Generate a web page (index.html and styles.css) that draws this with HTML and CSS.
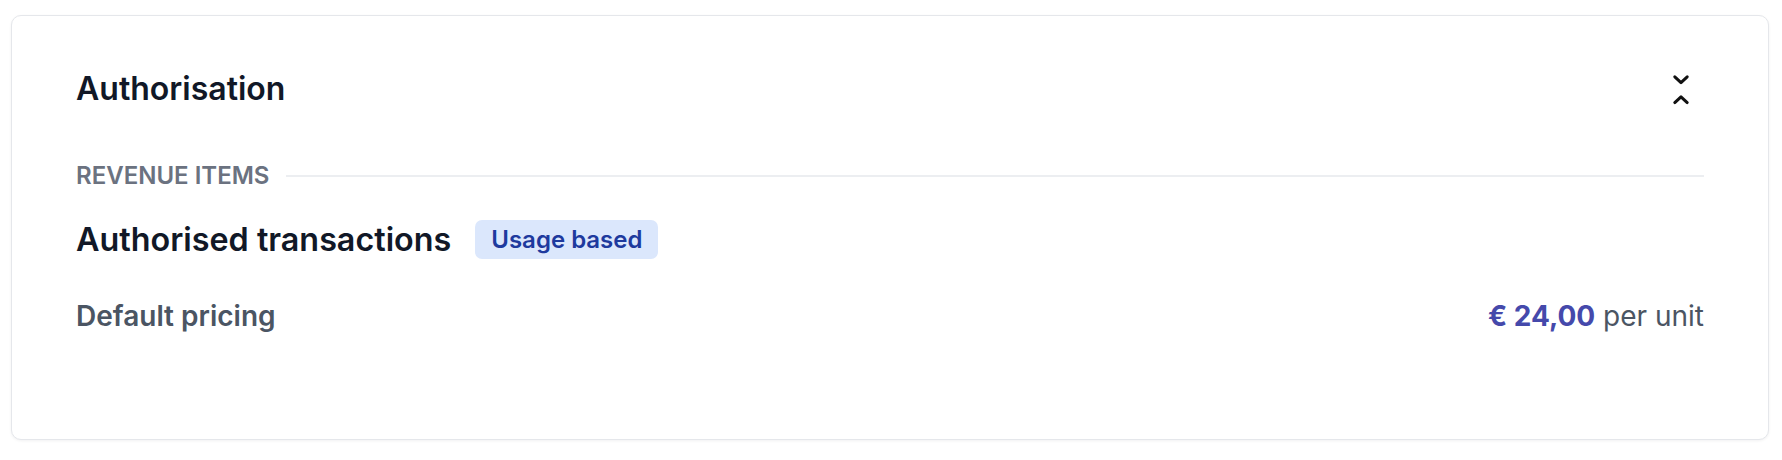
FILE: index.html
```html
<!DOCTYPE html>
<html lang="en">
<head>
<meta charset="utf-8">
<title>Authorisation</title>
<link rel="stylesheet" href="styles.css">
</head>
<body>
<div class="page">
  <section class="card">
    <header class="card-header">
      <h2 class="card-title">Authorisation</h2>
      <button class="toggle" type="button" aria-label="Collapse">
        <svg width="20" height="32" viewBox="0 0 20 32" fill="none" stroke="#111111" stroke-width="3" stroke-linecap="round" stroke-linejoin="round">
          <path d="M3.8 3.8 L10 9.6 L16.2 3.8"/>
          <path d="M3.8 29.6 L10 23.8 L16.2 29.6"/>
        </svg>
      </button>
    </header>
    <div class="section-label">
      <span class="label-text">Revenue items</span>
      <span class="label-line"></span>
    </div>
    <div class="item-head">
      <h3 class="item-title">Authorised transactions</h3>
      <span class="badge">Usage based</span>
    </div>
    <div class="price-row">
      <span class="price-label">Default pricing</span>
      <span class="price-value"><strong class="amount">€ 24,00</strong> per unit</span>
    </div>
  </section>
</div>
</body>
</html>
```

FILE: styles.css
```css
* { box-sizing: border-box; }
html, body { margin: 0; padding: 0; background: #ffffff; }
body {
  font-family: Inter, "Noto Sans", "Liberation Sans", sans-serif;
  color: #111827;
}
.page {
  padding: 15px 13px 19px 11px;
}
.card {
  border: 1px solid #e5e7eb;
  border-radius: 10px;
  box-shadow: 0 1px 3px rgba(17, 24, 39, 0.06);
  padding: 55px 64px 105px 64px;
  background: #fff;
}
.card-header {
  display: flex;
  align-items: center;
  justify-content: space-between;
  height: 36px;
}
.card-title {
  margin: 0;
  font-size: 32px;
  line-height: 36px;
  font-weight: 600;
  color: #111827;
}
.toggle {
  width: 46px;
  height: 36px;
  padding: 0;
  border: 0;
  background: transparent;
  display: flex;
  align-items: center;
  justify-content: center;
}
.toggle svg { display: block; }
.section-label {
  display: flex;
  align-items: center;
  gap: 17px;
  margin-top: 55px;
}
.label-text {
  font-size: 24px;
  line-height: 28px;
  font-weight: 600;
  text-transform: uppercase;
  color: #6b7280;
}
.label-line {
  flex: 1;
  height: 2px;
  background: #eceef1;
}
.item-head {
  display: flex;
  align-items: center;
  gap: 24px;
  margin-top: 30px;
}
.item-title {
  margin: 0;
  font-size: 32.3px;
  line-height: 36px;
  font-weight: 600;
  color: #111827;
}
.badge {
  display: inline-flex;
  align-items: center;
  height: 39px;
  padding: 0 16px;
  border-radius: 7px;
  background: #dbe7fc;
  color: #1e3a9e;
  font-size: 24px;
  font-weight: 600;
}
.price-row {
  display: flex;
  align-items: center;
  justify-content: space-between;
  margin-top: 39px;
  font-size: 28px;
  line-height: 36px;
}
.price-label {
  font-weight: 600;
  color: #4b5563;
}
.price-value {
  color: #4b5563;
  font-weight: 400;
}
.amount {
  font-weight: 700;
  color: #4549ab;
}
```
